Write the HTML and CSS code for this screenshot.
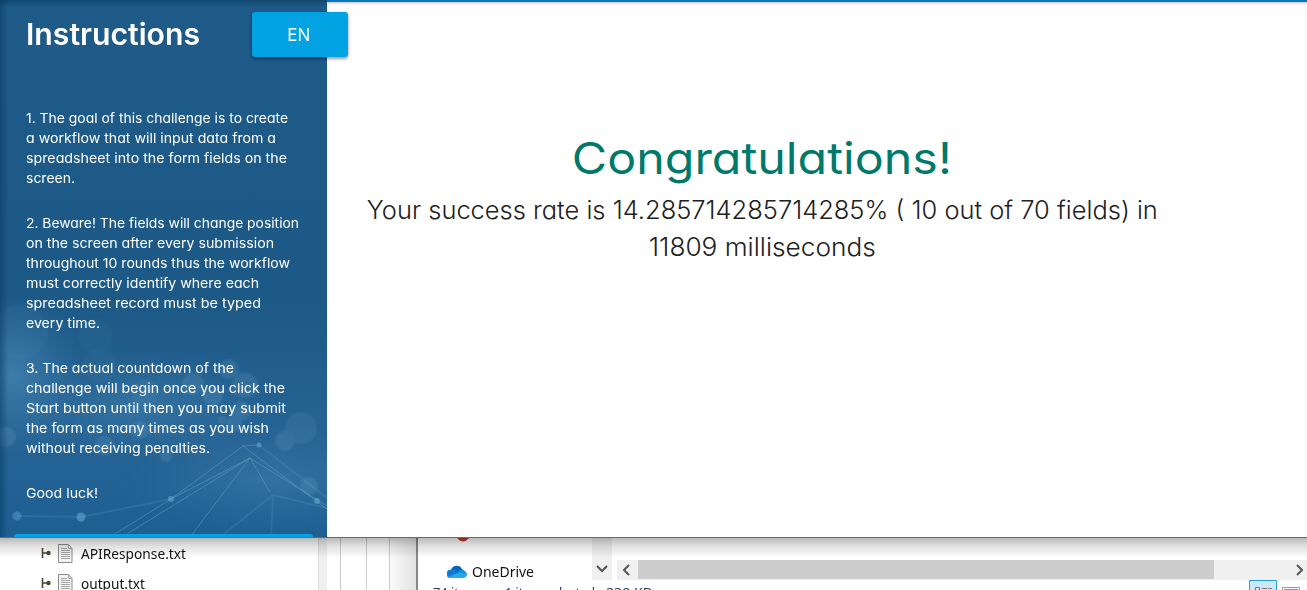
FILE: index.html
```html
<!DOCTYPE html>
<html lang="en">
<head>
<meta charset="utf-8">
<title>Challenge result</title>
<link rel="stylesheet" href="styles.css">
</head>
<body>
<div class="browser">
  <aside class="sidebar">
    <svg class="backdrop" viewBox="0 0 327 537" width="327" height="537" aria-hidden="true">
      <defs>
        <linearGradient id="base" x1="0" y1="0" x2="0" y2="1">
          <stop offset="0" stop-color="#1f5b88"/><stop offset=".55" stop-color="#1c5986"/><stop offset=".8" stop-color="#256394"/><stop offset="1" stop-color="#1e5f92"/>
        </linearGradient>
        <radialGradient id="glow"><stop offset="0" stop-color="#4786b5" stop-opacity=".75"/><stop offset="1" stop-color="#3b79a9" stop-opacity="0"/></radialGradient>
        <filter id="soft"><feGaussianBlur stdDeviation=".8"/></filter>
        <linearGradient id="edge"><stop offset="0" stop-color="#063a60" stop-opacity=".5"/><stop offset="1" stop-color="#063a60" stop-opacity="0"/></linearGradient>
        <linearGradient id="edgeTop" x1="0" y1="0" x2="0" y2="1"><stop offset="0" stop-color="#063a60" stop-opacity=".6"/><stop offset="1" stop-color="#063a60" stop-opacity="0"/></linearGradient>
      </defs>
      <rect width="327" height="537" fill="url(#base)"/>
      <ellipse cx="12" cy="375" rx="75" ry="80" fill="url(#glow)"/>
      <ellipse cx="140" cy="405" rx="130" ry="55" fill="url(#glow)" opacity=".65"/>
      <ellipse cx="270" cy="480" rx="150" ry="55" fill="url(#glow)" opacity=".6"/>
      <g fill="#7db2d4" opacity=".18" filter="url(#soft)">
        <circle cx="229" cy="369" r="10"/><circle cx="245" cy="385" r="13"/><circle cx="193" cy="384" r="11"/><circle cx="213" cy="396" r="10"/><circle cx="241" cy="411" r="10"/><circle cx="222" cy="420" r="4"/><circle cx="234" cy="424" r="8"/><circle cx="301" cy="428" r="16" opacity=".7"/><circle cx="285" cy="441" r="10"/><circle cx="6" cy="437" r="10"/><circle cx="6" cy="437" r="9"/><circle cx="104" cy="446" r="10"/><circle cx="166" cy="456" r="6"/><circle cx="309" cy="486" r="9"/><circle cx="140" cy="430" r="9"/><circle cx="145" cy="392" r="13" opacity=".5"/><circle cx="95" cy="336" r="18" opacity=".25"/><circle cx="100" cy="365" r="17" opacity=".3"/><circle cx="20" cy="332" r="28" opacity=".3"/>
      </g>
      <g fill="#67a5ce" opacity=".6"><circle cx="171" cy="499" r="3"/><circle cx="81" cy="517" r="4.5"/><circle cx="17" cy="516" r="4.5" opacity=".7"/><circle cx="317" cy="501" r="3"/><circle cx="259" cy="445" r="2.5"/></g>
      <g fill="none" stroke="#75add4" stroke-opacity=".42">
        <path d="M171 499 243 446 327 509M243 446l16-1M250 458 122 537M250 458 190 537M250 458 327 506M250 458l20 34M171 499l79-41M171 499 110 537"/>
        <path d="M17 516 81 517 171 499M259 445l68 53M273 495l54 13M273 495l-53 42M273 495l-2 42" stroke-opacity=".16" stroke-width="2"/>
      </g>
      <rect width="8" height="537" fill="url(#edge)"/>
      <rect width="327" height="7" fill="url(#edgeTop)"/>
    </svg>
    <div class="sidebar-content">
      <header class="sidebar-head">
        <h1><span data-w="174">Instructions</span></h1>
        <button class="lang"><span data-w="23">EN</span></button>
      </header>
      <div class="steps">
        <p><span data-w="262">1. The goal of this challenge is to create</span><span data-w="250">a workflow that will input data from a</span><span data-w="261">spreadsheet into the form fields on the</span><span data-w="49">screen.</span></p>
        <p><span data-w="273">2. Beware! The fields will change position</span><span data-w="248">on the screen after every submission</span><span data-w="264">throughout 10 rounds thus the workflow</span><span data-w="233">must correctly identify where each</span><span data-w="235">spreadsheet record must be typed</span><span data-w="74">every time.</span></p>
        <p><span data-w="208">3. The actual countdown of the</span><span data-w="259">challenge will begin once you click the</span><span data-w="260">Start button until then you may submit</span><span data-w="243">the form as many times as you wish</span><span data-w="184">without receiving penalties.</span></p>
        <p><span data-w="72">Good luck!</span></p>
      </div>
      <div class="download"></div>
    </div>
  </aside>
  <main class="result">
    <h2><span data-w="380">Congratulations!</span></h2>
    <p><span data-w="791">Your success rate is 14.285714285714285% ( 10 out of 70 fields) in</span><span data-w="227">11809 milliseconds</span></p>
  </main>
</div>
<div class="desktop">
  <div class="tree">
    <div class="file"><svg width="10" height="12" viewBox="0 0 10 12"><path d="M1.500 1v10M1 6h8" stroke="#4c4633" stroke-width="1.6"/><circle cx="7.500" cy="6" r="2.2" fill="#4c4633"/></svg><svg width="16" height="19" viewBox="0 0 16 19"><path d="M1.500.5h10l3.500 4v14H1.500z" fill="#f4f4f4" stroke="#8b8b8b"/><path d="M11.5.5v4H15M4 4.500h6M4 6.500h9M4 8.500h9M4 10.500h9M4 12.500h9M4 14.500h9" stroke="#a5a5a5" fill="none"/></svg><span data-w="105">APIResponse.txt</span></div>
    <div class="file"><svg width="10" height="12" viewBox="0 0 10 12"><path d="M1.500 1v10M1 6h8" stroke="#4c4633" stroke-width="1.6"/><circle cx="7.500" cy="6" r="2.2" fill="#4c4633"/></svg><svg width="16" height="19" viewBox="0 0 16 19"><path d="M1.500.5h10l3.500 4v14H1.500z" fill="#f4f4f4" stroke="#8b8b8b"/><path d="M11.5.5v4H15M4 4.500h6M4 6.500h9M4 8.500h9M4 10.500h9M4 12.500h9M4 14.500h9" stroke="#a5a5a5" fill="none"/></svg><span data-w="64">output.txt</span></div>
  </div>
  <div class="tree-scroll"></div>
  <div class="columns"><i></i><i></i><i></i></div>
  <div class="explorer">
    <div class="explorer-body">
      <div class="nav">
        <svg class="pin" width="12" height="4" viewBox="0 0 12 4"><path d="M0 0h12Q6 7 0 0z" fill="#c23a2e"/></svg>
        <div class="drive"><svg width="20" height="13" viewBox="0 0 20 13"><path d="M4 13a4 4 0 0 1-1-8l12 1c6-1 7 7 1 7z" fill="#28a8ea"/><path d="M4 5a6 6 0 0 1 11-1l1 1-8 4z" fill="#0364b8"/><path d="M1.500 12C-1.500 9 0 5 4 4.500c2-.5 4 0 8 2.500z" fill="#0f78d4"/><path d="M11 7c3-4 8-2 8 2z" fill="#1490df"/></svg><span data-w="62">OneDrive</span></div>
      </div>
      <div class="vscroll"><svg width="12" height="8" viewBox="0 0 12 8"><path d="m1 1 5 5 5-5" fill="none" stroke="#555" stroke-width="2"/></svg></div>
      <div class="hscroll"><svg width="8" height="12" viewBox="0 0 8 12"><path d="M7 1 2 6l5 5" fill="none" stroke="#555" stroke-width="2"/></svg><div class="thumb"></div><svg class="right" width="8" height="12" viewBox="0 0 8 12"><path d="m1 1 5 5-5 5" fill="none" stroke="#555" stroke-width="2"/></svg></div>
    </div>
    <div class="status"><span class="count" data-w="51">74 items</span><span class="selected" data-w="90">1 item selected</span><span class="size" data-w="46">239 KB</span><svg class="views" width="58" height="10" viewBox="0 0 58 10"><path d="M.5.500h27V11H.5z" fill="#cce8f6" stroke="#26a0da"/><path d="M6.500 10V7.500h4V10M13 8.500h5m1 0h4" fill="none" stroke="#777"/><path d="M33.500 10V7.500h17V10" fill="#fff" stroke="#999"/><path d="M35 9.500h14" stroke="#5b9bff"/></svg></div>
  </div>
</div>
<script src="fit.js"></script>
</body>
</html>
```
FILE: styles.css
```css
* { box-sizing: border-box; }
body { margin: 0; width: 1307px; height: 590px; overflow: hidden; background: #fff; font-family: Inter, "Open Sans", sans-serif; font-feature-settings: "cv11"; font-kerning: normal; display: flex; flex-direction: column; }
svg { flex: none; display: block; }
h1, h2, p { margin: 0; font-weight: 400; }
[data-w] { display: block; white-space: nowrap; width: max-content; transform-origin: left; }
.browser { display: flex; height: 538px; flex: none; border-bottom: 1px solid #6b6b6b; }
.sidebar { width: 327px; height: 537px; flex: none; display: grid; background: #1e5b88; color: #fff; }
.backdrop, .sidebar-content { grid-area: 1 / 1; min-width: 0; }
.sidebar-content { z-index: 1; display: flex; flex-direction: column; padding-left: 26px; height: 537px; }
.sidebar-head { display: flex; align-items: flex-start; justify-content: space-between; width: 322px; height: 108px; padding-top: 12px; flex: none; }
h1 { font-size: 30px; font-weight: 600; line-height: 45px; }
.lang { width: 96px; height: 45px; border: 0; border-radius: 3px; padding: 0 2px 0 0; background: #03a2e3; color: #fff; font: 400 17.5px/45px Inter, sans-serif; display: flex; justify-content: center; box-shadow: 0 2px 3px rgba(0,0,0,.3), 0 1px 5px rgba(0,0,0,.16); }
.steps { display: flex; flex-direction: column; gap: 25px; font-size: 13.3px; font-weight: 500; line-height: 20px; }
.download { width: 299px; height: 3px; margin: auto 0 0 -12px; background: #03a2e3; border-radius: 3px 3px 0 0; }
.result { flex: 1; border-top: 2px solid #0878bd; background: linear-gradient(#ccc, #fff 3px); display: flex; flex-direction: column; align-items: center; padding: 127px 110px 0 0; color: #212121; }
.result [data-w], .lang [data-w] { transform-origin: center; }
h2 { color: #00796b; font-size: 44px; line-height: 58px; }
.result p { display: flex; flex-direction: column; align-items: center; font-size: 25px; font-weight: 300; line-height: 37px; padding-top: 5px; }
.desktop { height: 52px; display: flex; position: relative; color: #111; font-family: "Noto Sans", sans-serif; font-size: 14.5px; }
.desktop::after { content: ""; position: absolute; inset: 0 0 auto; height: 20px; background: linear-gradient(rgba(0,0,0,.27), rgba(0,0,0,.12) 40%, transparent); }
.tree { width: 318px; flex: none; padding-left: 41px; }
.file { display: flex; align-items: center; height: 30px; line-height: 30px; }
.file svg + svg { margin: 0 8px 0 6px; }
.tree-scroll { width: 9px; flex: none; background: #f0f0f0; border-left: 1px solid #ddd; }
.columns { width: 89px; flex: none; display: grid; grid-template-columns: 14px 26px 23px 1fr; background: linear-gradient(90deg, #fff 65%, #e2e2e2); }
.columns i { border-right: 1px solid #ccc; }
.explorer { flex: 1; border-left: 2px solid #888; min-width: 0; }
.explorer-body { display: flex; height: 42px; }
.nav { width: 174px; padding-left: 29px; }
.pin { margin-left: 10px; }
.drive { display: flex; align-items: center; gap: 5px; padding-top: 19px; line-height: 20px; }
.vscroll { width: 20px; background: #f0f0f0; display: flex; align-items: flex-end; justify-content: center; padding: 0 1px 7px 0; }
.hscroll { height: 20px; align-self: flex-end; margin-left: 5px; width: 690px; background: #f0f0f0; display: flex; align-items: center; padding: 0 3px 0 5px; }
.thumb { width: 576px; height: 19px; margin: 0 0 1px 8px; background: #cdcdcd; }
.right { margin-left: auto; }
.status { display: flex; height: 10px; overflow: hidden; font-size: 12px; line-height: 26px; color: #1c3a62; padding-left: 15px; }
.selected { margin-left: 24px; }
.size { margin-left: 16px; }
.views { margin-left: auto; }
```
FILE: fit.js
```js
// Stretches the glyphs of each line so that it fills its nominal width.
document.querySelectorAll("[data-w]").forEach(function (el) {
  var ratio = Number(el.dataset.w) / el.getBoundingClientRect().width;
  el.style.transform = "scaleX(" + ratio + ")";
});
```
